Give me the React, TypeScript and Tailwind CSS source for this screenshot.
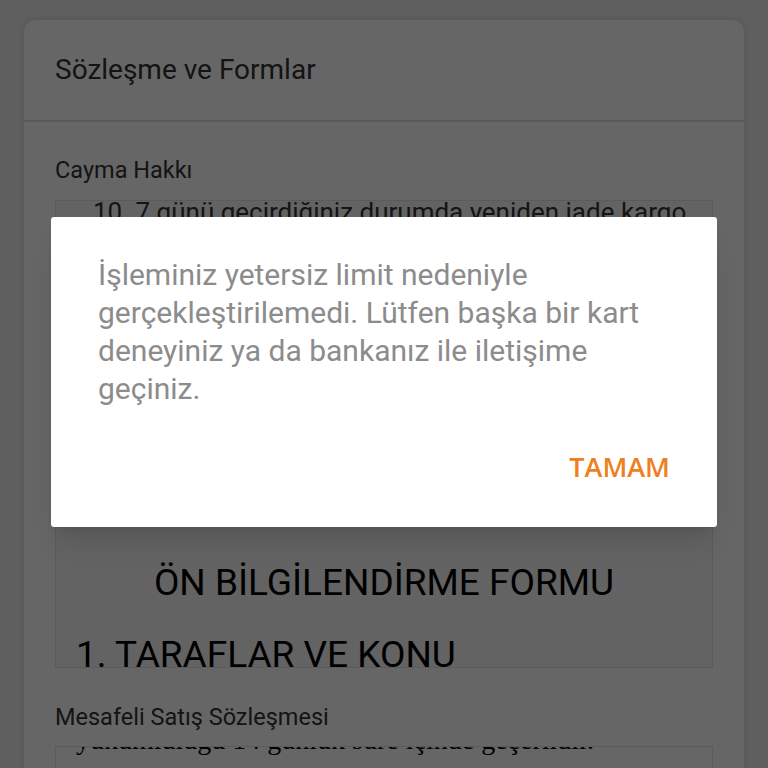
const caymaLines = [
  "10. 7 günü geçirdiğiniz durumda yeniden iade kargo",
  "gönderimi yapılamaz. Ürünün tarafınıza ulaştığı",
  "tarihten itibaren 14 gün içinde iade talebinde",
  "bulunabilirsiniz. İade edilecek ürünün",
  "faturası ile birlikte gönderilmesi gerekir.",
  "",
  "",
];

const Dialog = () => (
  <div className="absolute inset-0 z-20 flex items-start justify-center bg-black/60">
    <div className="mt-[217px] w-[666px] rounded-[3px] bg-white shadow-xl">
      <p className="px-[47px] pt-[39px] text-[30px] leading-[38px] text-[#8c8c8c]">
        İşleminiz yetersiz limit nedeniyle gerçekleştirilemedi. Lütfen başka bir kart deneyiniz ya da bankanız ile
        iletişime geçiniz.
      </p>
      <div className="flex justify-end px-[47px] pt-[45px] pb-[47px]">
        <button className="font-['Open_Sans',sans-serif] text-[27px] leading-none font-semibold text-[#ee7f22]">
          TAMAM
        </button>
      </div>
    </div>
  </div>
);

export default function App() {
  return (
    <div className="relative h-[768px] w-[768px] overflow-hidden bg-[#ededed] font-['Roboto',sans-serif]">
      <div className="px-6 pt-5">
        <div className="rounded-xl bg-white shadow-[0_0_6px_rgba(0,0,0,0.12)]">
          <div className="flex h-[100px] items-center px-[31px]">
            <h1 className="text-[28px] text-[#333333]">Sözleşme ve Formlar</h1>
          </div>
          <div className="h-[2px] bg-[#dcdcdc]" />
          <div className="px-[31px] pt-[32px]">
            <h2 className="text-[23.5px] leading-[32px] text-[#333333]">Cayma Hakkı</h2>
            <div className="mt-[14px] h-[468px] overflow-hidden border border-[#e4e4e4] bg-[#f7f7f7]">
              <div className="-mt-[8px] pl-[37px] text-[26px] leading-[38px] text-[#333333]">
                {caymaLines.map((l, i) => (
                  <p key={i} className="h-[38px]">
                    {l}
                  </p>
                ))}
              </div>
              <h3 className="mt-[102px] text-center text-[37px] leading-[44px] text-black">ÖN BİLGİLENDİRME FORMU</h3>
              <h3 className="mt-[28px] pl-[20px] text-[37px] leading-[44px] text-black">1. TARAFLAR VE KONU</h3>
            </div>
            <h2 className="mt-[33px] text-[23.5px] leading-[32px] text-[#333333]">Mesafeli Satış Sözleşmesi</h2>
            <div className="mt-[13px] h-[200px] overflow-hidden border border-[#e4e4e4] bg-white">
              <div className="-mt-[26px] pl-[20px] font-['Liberation_Serif',serif] text-[28px] leading-[38px] text-black">
                <p>yükümlülüğü 14 günlük süre içinde geçerlidir.</p>
                <p>bulunmak için ilgili süre içinde satıcıya bildirimde</p>
              </div>
            </div>
          </div>
        </div>
      </div>
      <Dialog />
    </div>
  );
}
